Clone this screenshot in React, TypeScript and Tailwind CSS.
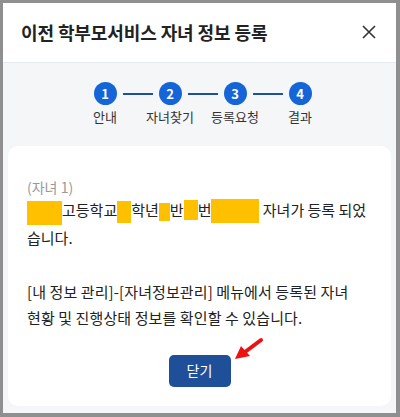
import React from "react";

const font = { fontFamily: '"Noto Sans CJK KR", "Noto Sans", sans-serif' };

function Mask({ w, h, off = 0 }: { w: number; h: number; off?: number }) {
  return (
    <span
      className="inline-block bg-[#ffc000] align-middle"
      style={{ width: w, height: h, marginTop: off }}
    />
  );
}

const steps = ["안내", "자녀찾기", "등록요청", "결과"];

export default function App() {
  return (
    <div
      className="w-[400px] h-[417px] bg-[#8f8f8f] pl-[3px] pt-[3px] pr-[4px] pb-[4px] overflow-hidden"
      style={font}
    >
      <div className="w-full h-full flex flex-col bg-[#f4f6f8]">
        {/* header */}
        <div className="h-[60px] shrink-0 bg-white border-b border-[#e6eaef] flex items-center justify-between pl-[18px] pr-[20px]">
          <h1 className="text-[18px] font-bold text-[#222] tracking-[-0.1px]">
            이전 학부모서비스 자녀 정보 등록
          </h1>
          <svg width="14" height="14" viewBox="0 0 14 14" className="mt-[-2px]">
            <path d="M1 1L13 13M13 1L1 13" stroke="#333" strokeWidth="1.6" />
          </svg>
        </div>

        {/* stepper */}
        <div className="flex justify-center pt-[19px] pl-[6px]">
          <div className="flex items-start">
            {steps.map((s, i) => (
              <React.Fragment key={s}>
                <div className="flex flex-col items-center w-[23px] relative">
                  <div className="w-[23px] h-[23px] rounded-full bg-[#1565d8] text-white text-[13px] font-bold flex items-center justify-center">
                    {i + 1}
                  </div>
                  <span className="absolute top-[25px] whitespace-nowrap text-[13px] text-[#333]">
                    {s}
                  </span>
                </div>
                {i < steps.length - 1 && (
                  <div className="w-[30px] h-[2px] bg-[#1d4f9c] mx-[6px] mt-[11px]" />
                )}
              </React.Fragment>
            ))}
          </div>
        </div>

        {/* content card */}
        <div className="mx-[5px] mt-[41px] mb-[7px] flex-1 bg-white rounded-[10px] px-[19px] pt-[31px] flex flex-col">
          <p className="text-[14px] text-[#999] leading-[20px]">(자녀 1)</p>
          <p className="text-[15px] text-[#222] leading-[26px]">
            <Mask w={35} h={24} off={2} />고등학교<Mask w={14} h={22} />학년
            <Mask w={11} h={18} />반<Mask w={14} h={20} off={-4} />번
            <Mask w={48} h={24} off={-2} /> 자녀가 등록 되었습니다.
          </p>
          <p className="text-[15px] text-[#222] leading-[26px] mt-[28px] break-keep tracking-[0.1px]">
            [내 정보 관리]-[자녀정보관리] 메뉴에서 등록된 자녀 현황 및 진행상태 정보를 확인할 수 있습니다.
          </p>
          <div className="flex justify-center mt-[24px] relative">
            <button className="w-[62px] h-[32px] rounded-[5px] bg-[#1f4f99] text-white text-[14px]">
              닫기
            </button>
            <svg
              width="32"
              height="28"
              viewBox="0 0 32 28"
              className="absolute left-[206px] top-[-18px]"
            >
              <path d="M28 3L12 15" stroke="#ee1111" strokeWidth="4" strokeLinecap="round" />
              <path d="M2 22L8 9L17 19Z" fill="#ee1111" />
            </svg>
          </div>
        </div>
      </div>
    </div>
  );
}
